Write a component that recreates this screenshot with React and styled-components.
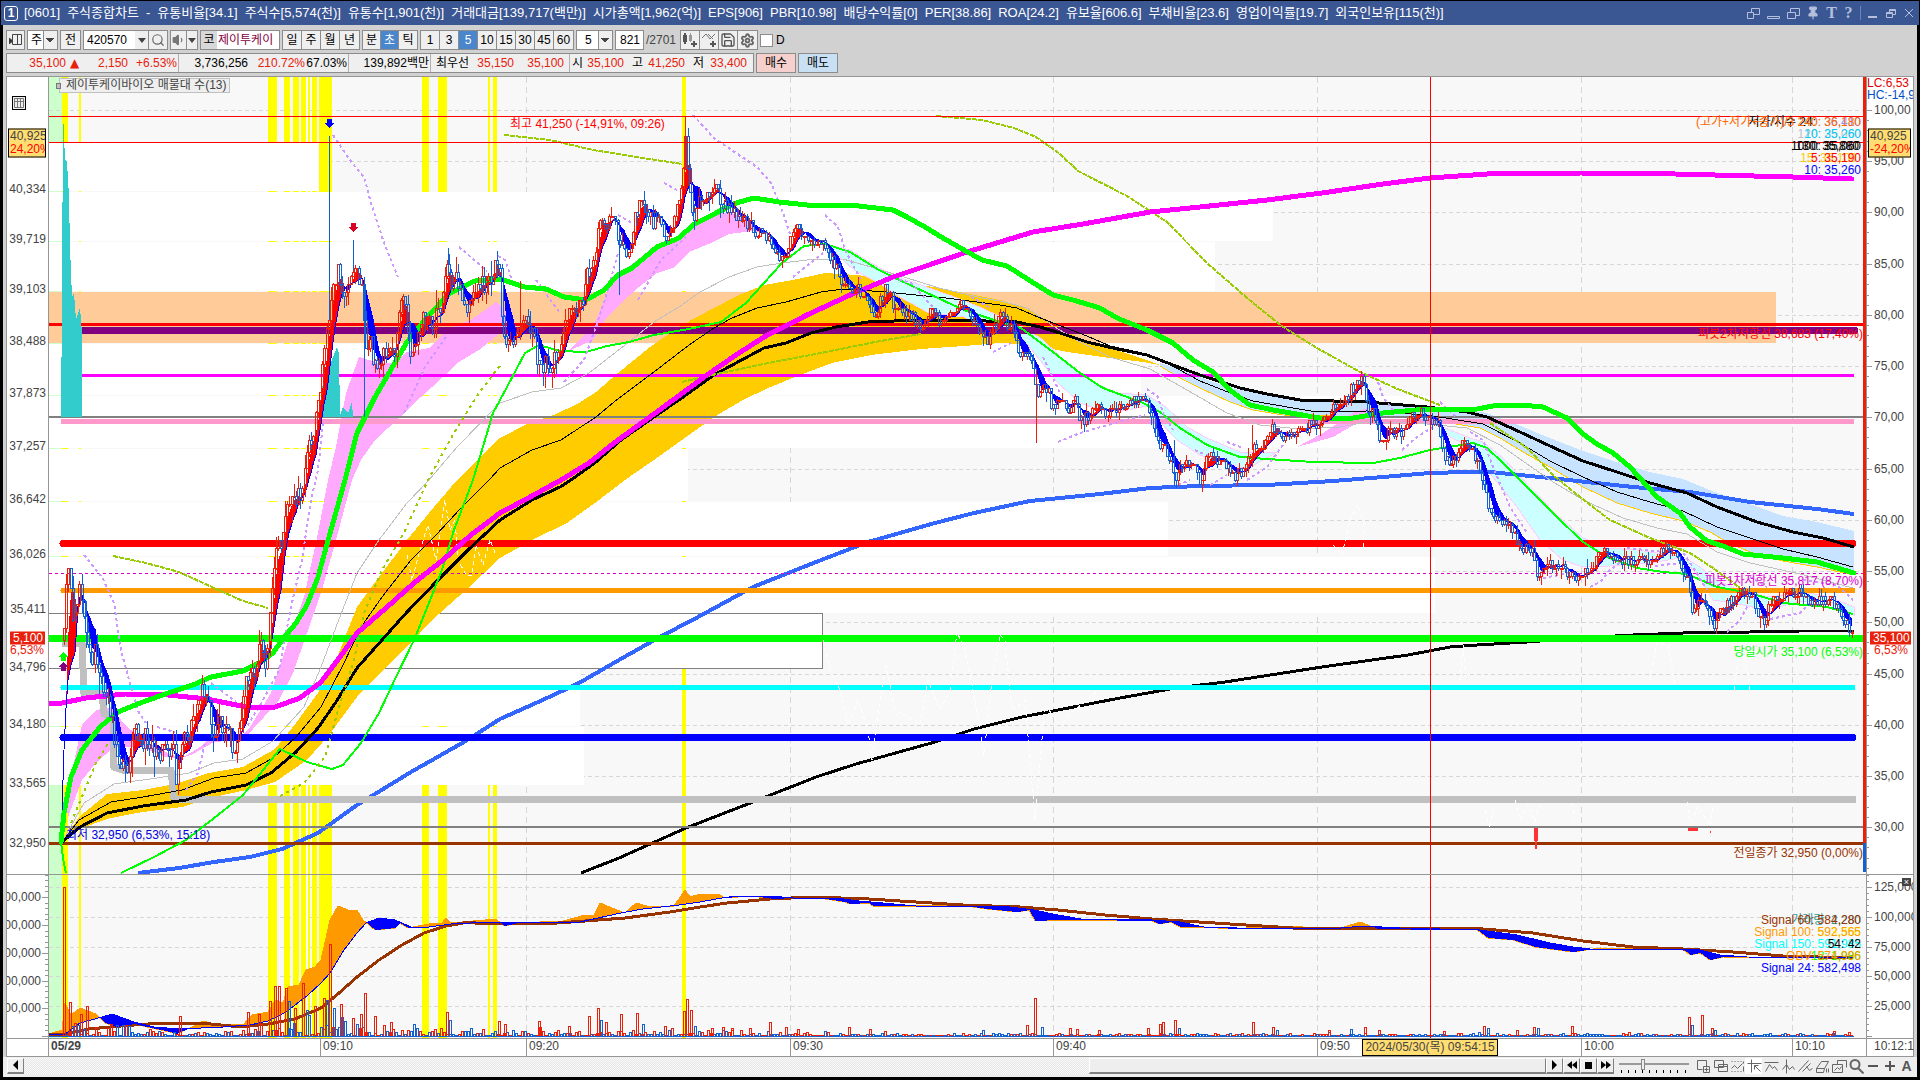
import React from 'react'
import styled, { createGlobalStyle, css } from 'styled-components'
import { Search, Volume1, Save, Settings, Pin } from 'lucide-react'

/* ---------- chart data ---------- */

const AREA = { x: 49, w: 1817 }
const PRICE = { y: 77, h: 797 }
const VOLUME = { y: 875, h: 163 }

const px = (x) => `${((x - AREA.x) / AREA.w) * 100}%`
const py = (pane, y) => `${((y - pane.y) / pane.h) * 100}%`

const GRID_X = [320, 526, 790, 1053, 1317, 1581, 1792]
const PRICE_GRID = [110, 161, 212, 264, 315, 366, 417, 469, 520, 571, 622, 674, 725, 776, 827]
const VOLUME_GRID = [887, 917, 947, 976, 1006]

// [x, width]
const STRIPES = [
  [62, 6], [79, 2], [268, 9], [284, 6], [293, 6], [301, 5], [308, 2], [312, 5],
  [319, 13], [422, 7], [438, 9], [488, 2], [493, 4], [682, 4],
]

// [top, bottom, right edge]
const PROFILE = [
  [143, 191, 319], [192, 241, 1273], [242, 291, 1215], [344, 395, 1141], [396, 448, 1430],
  [449, 501, 688], [502, 556, 1168], [557, 613, 1435], [614, 668, 823], [669, 726, 580], [727, 785, 584],
]

const GOLD =
  '62,842 79,817 107,794 143,790 175,784 209,773 243,767 275,749 296,723 318,693 336,660 357,607 379,577 407,540 429,513 457,480 500,438 529,423 554,415 579,403 596,392 618,373 650,347 682,325 714,308 739,295 764,285 793,280 825,273 857,275 879,278 904,282 939,288 1000,300 1017,305 1033,312 1053,324 1083,340 1110,348 1147,360 1160,365 1143,362 1110,358 1067,352 1053,349 1017,344 1000,343 964,346 921,349 871,355 832,363 800,375 768,388 743,400 714,417 689,435 661,455 625,480 595,503 567,523 532,540 500,558 468,588 429,623 411,643 386,667 357,697 329,735 307,760 275,782 246,790 214,797 182,807 136,813 107,819 82,828'

const SKY_TOP =
  '1160,363 1187,372 1213,382 1240,390 1283,397 1333,401 1383,402 1430,406 1467,410 1487,413 1523,427 1550,438 1583,451 1617,462 1650,472 1683,479 1717,493 1750,504 1783,516 1817,522 1854,531'
const SKY_BOTTOM =
  '1854,575 1817,567 1783,561 1750,552 1727,542 1710,532 1683,521 1650,513 1617,503 1583,487 1550,467 1523,452 1500,438 1480,428 1450,423 1400,417 1333,416 1283,415 1253,410 1230,402 1200,388 1180,378 1160,366'

const PINK_BANDS = [
  '66,800 82,725 96,710 111,707 125,725 143,740 164,751 179,758 164,757 143,747 114,747 96,763 82,780 68,817',
  '182,758 200,747 214,735 243,735 250,727 271,693 286,647 304,597 318,533 328,480 336,447 346,393 359,357 379,363 393,363 407,352 429,348 450,328 471,320 496,302 504,310 511,327 529,330 500,333 479,350 457,363 443,377 421,397 400,417 375,440 361,460 352,480 336,540 321,593 307,633 293,673 279,700 264,717 243,740 214,742 193,754',
  '568,352 586,333 596,320 611,283 621,273 650,250 679,240 693,227 714,213 732,213 750,222 771,235 754,231 729,234 711,243 689,252 675,267 657,273 639,287 621,303 607,317 593,340 571,350',
  '1297,447 1323,433 1353,413 1367,408 1377,420 1357,423 1333,437',
]

const CYAN_BANDS = [
  '825,244 850,250 871,263 893,275 921,285 957,298 982,308 1007,320 1020,325 1043,340 1067,363 1093,382 1117,393 1147,395 1167,408 1187,427 1207,438 1240,452 1277,452 1247,469 1227,463 1200,455 1177,440 1160,422 1147,406 1123,411 1100,410 1080,403 1057,382 1040,360 1017,332 982,327 964,317 929,313 900,297 879,283 854,270 832,250',
  '1440,426 1470,438 1483,442 1503,458 1530,487 1557,515 1583,538 1607,548 1637,550 1683,557 1697,565 1717,580 1743,592 1770,597 1803,592 1830,597 1854,607 1854,615 1827,600 1797,602 1767,610 1733,603 1713,600 1697,573 1680,558 1650,563 1610,566 1583,567 1563,560 1540,540 1517,507 1493,477 1470,447 1450,437',
]

const TEAL = [
  '61,417 62,300 63,112 65,160 67,162 69,197 70,247 72,297 74,293 76,320 80,308 82,333 82,417',
  '320,417 323,380 329,367 337,347 339,353 340,415 343,407 348,413 352,402 353,417',
]

const LINES = {
  black:
    '62,842 80,827 107,813 143,806 186,800 211,792 246,785 271,773 296,752 318,728 336,702 357,668 382,640 407,612 436,582 468,550 500,520 532,500 560,487 571,480 596,462 621,440 654,417 686,395 714,375 736,363 764,348 786,343 811,333 836,327 868,322 921,320 986,321 1017,322 1040,327 1060,333 1087,342 1117,349 1147,355 1173,365 1200,375 1240,388 1267,394 1300,400 1367,402 1427,407 1467,412 1487,417 1520,432 1550,446 1583,461 1617,472 1650,483 1687,493 1717,507 1757,522 1793,532 1823,538 1854,547',
  hairline:
    '62,842 79,820 111,802 143,797 182,790 214,778 246,773 273,758 296,737 321,707 343,665 361,627 382,597 411,560 436,535 461,508 489,480 500,468 532,450 561,440 596,417 614,402 650,375 689,345 714,328 732,318 757,308 786,302 821,292 843,289 886,292 946,298 1000,305 1017,308 1033,315 1053,323 1087,336 1110,346 1147,354 1167,363 1200,381 1233,394 1253,401 1293,408 1317,412 1367,411 1427,415 1483,424 1520,443 1550,461 1583,477 1617,492 1650,502 1683,511 1717,527 1750,538 1783,549 1817,557 1853,567',
  gray:
    '62,842 84,803 114,784 157,778 189,773 214,763 243,759 273,741 304,707 321,667 336,627 357,573 379,540 407,503 429,480 457,447 500,403 532,392 561,388 589,373 625,345 654,322 679,307 700,292 729,277 757,267 782,263 807,260 843,259 871,267 904,277 939,288 982,298 1000,301 1027,308 1053,326 1080,342 1110,357 1150,369 1187,390 1227,413 1260,425 1300,429 1340,427 1367,422 1417,423 1467,428 1500,445 1550,480 1583,500 1623,518 1657,528 1687,534 1717,552 1750,563 1800,574 1853,588',
  magenta:
    '49,703 62,703 86,698 125,694 168,695 207,699 246,707 275,707 300,698 321,682 343,653 357,633 386,608 414,583 443,560 471,535 500,513 532,496 561,480 589,463 614,443 654,414 707,375 736,355 764,337 807,315 850,295 893,277 929,265 964,253 1000,242 1033,232 1083,224 1150,212 1200,207 1267,200 1322,193 1383,184 1430,178 1487,174 1581,173 1675,174 1793,177 1852,179',
  green:
    '61,842 64,813 71,777 82,750 100,727 118,712 143,702 168,693 193,685 211,677 243,671 261,662 273,653 282,640 296,623 307,605 318,577 329,537 345,480 357,433 375,397 389,373 407,342 429,315 450,293 475,281 500,279 525,287 546,289 564,297 586,300 604,290 618,275 632,268 657,247 679,238 693,225 718,212 736,203 754,198 779,202 807,205 850,205 893,210 907,217 925,227 943,238 964,250 982,260 1007,266 1029,280 1053,295 1073,300 1100,308 1117,318 1147,330 1173,343 1193,360 1213,372 1230,390 1250,405 1273,410 1320,418 1347,419 1383,413 1427,409 1477,409 1493,406 1520,405 1543,407 1567,418 1583,434 1597,444 1613,453 1630,467 1657,497 1680,513 1690,527 1707,541 1723,546 1743,554 1783,558 1817,562 1854,573',
  greenThin:
    '121,873 154,857 186,840 218,815 243,795 280,749 307,762 332,769 343,765 361,743 379,713 396,677 414,640 429,603 443,567 454,530 473,480 482,450 493,413 507,387 525,353 539,345 560,351 586,352 607,346 629,342 654,335 689,329 721,322 746,303 764,283 782,263 804,246 825,244 850,252 879,270 914,287 964,310 1000,322 1021,328 1053,352 1080,373 1103,388 1143,403 1160,412 1180,428 1207,445 1240,457 1267,459 1313,462 1373,463 1400,458 1430,450 1473,443 1487,448 1503,463 1533,493 1557,517 1583,542 1607,557 1637,568 1663,572 1687,574 1717,587 1750,593 1783,603 1827,607 1853,614',
  blue:
    '138,873 179,868 214,862 250,857 282,849 318,833 357,805 411,772 464,742 500,719 536,703 560,692 579,683 619,660 658,638 698,617 753,587 816,562 868,542 935,523 974,513 1030,501 1100,494 1150,488 1200,486 1267,485 1333,481 1383,477 1430,473 1467,472 1490,472 1550,478 1633,487 1690,492 1750,502 1817,509 1854,514',
  blackLow:
    '581,873 619,858 686,828 753,802 816,777 856,764 935,742 974,729 1022,717 1120,698 1176,688 1225,682 1322,667 1408,655 1450,647 1477,645 1527,642 1580,638 1633,635 1683,633 1750,632 1800,631 1854,631',
  silver: '62,643 82,643 84,693 102,694 104,714 113,716 114,767 123,770 171,770 174,799 1856,799',
}

// [y, from, to, thickness, colour, round]
const LEVELS = [
  [324, 49, 1863, 3, '#ff0000'],
  [330, 82, 1855, 7, '#800080', true],
  [375, 82, 1854, 3, '#ff00ff'],
  [421, 61, 1854, 5, '#ff99cc'],
  [417, 49, 1863, 2, '#808080'],
  [543, 63, 1853, 7, '#ff0000', true],
  [590, 63, 1853, 5, '#ff9900', true],
  [638, 49, 1863, 7, '#00ff00'],
  [687, 63, 1853, 5, '#00ffff', true],
  [737, 63, 1853, 7, '#0000ff', true],
  [827, 49, 1863, 2, '#808080'],
  [843, 49, 1863, 3, '#993300'],
]

const SAR_FAST = [
  '333,135 352,163 364,177 371,203 384,243 398,277', '459,247 487,271', '498,256 505,260 512,280',
  '536,280 560,313', '446,337 425,367 404,413', '323,423 318,470 311,500 302,560 291,607 279,670 262,702 246,728',
  '84,555 102,577 114,603 121,650 129,680 139,713 146,723', '157,727 175,732', '186,790 198,773 205,743',
  '211,683 236,702', '693,115 714,138 736,153 757,167 771,183 782,210 791,237', '664,183 677,190',
  '618,215 632,223', '825,215 838,227 845,250 861,280', '793,277 823,253', '893,278 911,283 929,303 943,317',
  '971,297 989,307', '993,352 1011,343', '564,382 584,360 596,327 607,293 618,253', '638,300 661,260 686,237',
  '1147,389 1158,397 1163,413 1173,430', '1058,442 1080,433 1115,423 1145,415', '1178,485 1190,480',
  '1195,450 1213,458', '1210,485 1227,475', '1227,442 1243,448', '1247,480 1267,467 1283,445',
  '1378,382 1383,397 1393,410', '1402,450 1417,437 1433,427', '1440,402 1457,418', '1043,357 1060,393',
  '1470,432 1483,440 1493,467 1510,507 1527,533', '1543,578 1570,573', '1590,587 1600,582 1610,570 1623,560',
  '1627,548 1663,552', '1680,548 1693,567 1707,590', '1655,566 1680,563', '1727,632 1740,620 1748,605',
  '1750,577 1767,587', '1770,619 1800,613 1813,600', '1803,580 1837,585 1853,600',
]

const SAR_SLOW = [
  '504,135 550,140 593,150 643,158 682,164',
  '936,116 982,120 1014,128 1036,137 1060,154 1078,171 1127,196 1167,222 1207,263 1247,298 1283,327 1317,348 1360,372 1400,390 1440,405',
  '1490,423 1527,448 1553,475 1580,497 1610,520 1650,538 1690,553 1713,568 1740,588',
  '113,556 146,563 179,572 214,588 243,601 268,608',
  '682,382 721,373 768,363 821,353 875,342 921,334',
]

const SAR_DOTS = [
  '71,823 86,787 96,763 109,742',
  '280,796 304,783 325,757 339,707 354,660 364,613 382,570 404,533 429,478 454,433 479,393 502,363',
]

const GHOSTS = [
  '407,555 412,580 420,550 428,525 436,560 445,500 450,530 455,520 458,560 466,575 472,575 476,545 483,565 490,540 496,555',
  '823,640 830,670 840,690 848,725 858,700 868,730 872,760 880,700 886,665 895,710 905,715 920,725 928,680 940,710 950,690 957,632 965,650 975,700 984,755 992,680 1000,635 1005,640 1012,710 1025,700 1035,820 1045,705 1060,725 1075,710 1098,690',
  '1333,545 1342,555 1350,520 1358,505 1363,520 1364,550',
  '1460,680 1463,645 1466,680', '1650,680 1657,643 1668,645 1675,685', '1734,690 1738,660 1745,655 1750,690',
  '1485,810 1490,828 1494,806', '1515,800 1520,820 1528,805 1535,822 1540,803', '1572,803 1575,820', '1687,802 1690,826 1698,806 1710,826 1713,805',
]

const PRICE_PATH =
  '64,640 66,580 68,565 70,575 73,620 76,600 80,585 83,600 86,640 89,660 92,670 95,645 98,655 101,680 105,700 109,700 113,730 117,755 121,760 125,765 130,760 136,725 140,750 145,738 150,745 157,758 163,752 168,755 173,745 176,785 179,775 181,740 186,733 191,725 197,705 204,690 208,700 214,735 218,715 224,725 229,725 234,755 238,745 243,700 247,670 250,680 255,660 260,650 264,660 267,660 271,610 274,560 277,545 281,540 285,510 290,505 296,505 300,490 303,470 307,450 312,430 318,410 322,370 326,330 329,315 332,300 336,285 339,270 343,290 347,285 351,265 354,270 358,275 362,290 365,340 370,345 375,370 380,355 385,350 392,352 397,335 400,285 403,305 407,320 410,355 414,340 420,338 426,306 432,320 438,315 443,285 447,258 452,290 456,272 462,300 468,305 474,300 480,283 488,280 494,270 499,265 502,310 507,350 512,350 518,330 524,320 530,325 535,350 540,370 545,365 554,362 559,350 564,330 570,305 575,303 582,303 587,270 594,265 598,225 605,222 616,222 621,250 629,250 634,227 639,195 645,205 652,220 661,220 666,238 673,222 679,200 683,167 685,140 689,190 693,222 698,203 709,200 715,183 721,205 732,212 743,222 754,230 768,237 777,257 783,263 788,243 796,223 807,238 823,243 836,270 850,293 864,290 875,317 884,287 896,307 921,325 930,310 943,323 959,303 975,320 986,343 1002,313 1013,333 1020,357 1032,357 1037,400 1042,387 1048,387 1053,410 1060,397 1068,413 1075,403 1080,423 1090,413 1100,400 1103,412 1120,408 1127,402 1145,397 1150,417 1160,443 1168,453 1174,477 1180,467 1192,458 1200,483 1210,450 1218,463 1225,463 1233,477 1243,473 1253,447 1263,447 1272,427 1283,433 1293,438 1307,427 1323,420 1335,403 1343,407 1353,387 1363,380 1367,407 1373,413 1380,440 1390,433 1403,430 1412,413 1420,410 1430,422 1438,425 1445,457 1457,460 1463,440 1472,450 1480,467 1487,500 1492,520 1500,520 1512,527 1520,547 1532,547 1537,573 1545,565 1563,567 1574,580 1578,572 1590,573 1598,553 1617,557 1633,560 1650,558 1663,550 1678,555 1687,580 1693,613 1702,600 1710,617 1713,627 1720,613 1733,600 1740,590 1753,597 1758,617 1765,618 1772,597 1800,592 1813,600 1830,600 1840,613 1850,627 1854,633'

const OBV =
  '49,1034 62,1030 65,1003 71,1015 80,1008 96,1014 105,1023 116,1027 134,1024 147,1027 170,1032 176,1034 192,1027 203,1021 214,1024 243,1025 252,1015 268,1012 275,1000 283,1003 288,987 299,985 306,970 315,967 321,960 330,920 338,906 348,910 357,910 363,920 375,930 395,928 400,923 408,928 429,924 442,923 446,918 451,923 496,919 504,926 518,923 563,921 585,915 594,915 600,903 612,908 625,913 636,903 647,906 674,906 685,890 690,897 697,895 718,894 725,898 751,896 774,899 812,897 845,902 850,904 869,903 873,906 916,906 958,905 987,909 1017,912 1029,910 1035,921 1058,920 1081,920 1152,921 1159,924 1171,922 1180,927 1199,927 1237,929 1265,926 1341,928 1360,922 1378,929 1443,930 1477,930 1488,938 1513,940 1535,947 1573,952 1600,948 1683,949 1690,955 1700,953 1710,960 1723,957 1783,958 1853,958'
const SIGNAL_FAST =
  '49,1034 65,1034 80,1023 102,1017 112,1014 134,1022 154,1027 179,1029 223,1027 250,1025 268,1021 286,1012 308,995 321,983 330,973 344,950 357,933 366,923 379,918 395,920 411,927 429,927 451,924 491,922 580,922 598,918 621,913 643,909 679,905 700,902 722,898 737,896 770,896 793,898 836,898 859,901 883,903 916,906 963,906 1010,907 1034,910 1058,915 1081,919 1152,920 1180,922 1204,927 1237,928 1341,928 1364,926 1400,928 1480,930 1517,935 1550,943 1573,947 1590,949 1680,949 1700,950 1720,955 1747,957 1853,958'
const SIGNAL_SLOW =
  '49,1035 65,1034 89,1029 121,1026 161,1023 201,1023 241,1027 268,1024 295,1019 321,1008 339,993 357,977 379,960 402,945 424,933 446,926 469,922 482,924 558,923 625,918 670,912 700,907 727,903 770,899 812,897 869,899 916,902 963,905 1020,907 1058,910 1105,915 1152,919 1199,922 1246,925 1293,928 1341,928 1420,928 1483,929 1533,933 1583,941 1633,947 1683,949 1733,952 1783,956 1853,958'

// [x, height, falling]
const SPIKES = [
  [63, 149], [69, 34], [86, 30], [80, 22], [179, 20], [247, 24], [258, 22], [269, 35], [274, 50], [278, 50],
  [285, 48], [288, 35, true], [294, 28], [302, 53], [306, 26, true], [314, 30], [323, 38], [326, 36, true],
  [329, 92], [333, 28, true], [340, 32], [352, 18], [360, 22], [364, 43], [374, 20], [390, 14], [446, 24],
  [449, 16, true], [498, 15], [504, 12], [538, 15], [568, 10], [588, 20], [597, 28], [600, 16, true], [605, 14],
  [620, 22], [636, 23], [642, 12, true], [664, 10], [683, 25], [686, 37], [690, 26], [694, 10, true], [711, 8],
  [722, 9], [731, 8], [749, 8], [769, 14], [785, 9], [797, 7], [848, 9], [869, 7], [982, 6, true], [1026, 11],
  [1034, 38], [1041, 9, true], [1069, 8], [1076, 7], [1098, 6], [1147, 8], [1159, 12], [1162, 14], [1174, 16],
  [1178, 8, true], [1252, 14], [1272, 9], [1276, 6, true], [1328, 6], [1350, 7, true], [1364, 9], [1378, 6],
  [1443, 5], [1483, 10], [1487, 8, true], [1516, 6], [1533, 9], [1537, 8, true], [1571, 10], [1688, 19],
  [1691, 11, true], [1701, 21], [1711, 8], [1714, 6, true], [1833, 5], [1848, 4],
]

function parse(points) {
  return points.split(' ').map((pair) => pair.split(',').map(Number))
}

function sampler(points) {
  const list = parse(points)
  return (x) => {
    const next = list.findIndex((point) => point[0] >= x)
    if (next === 0) return list[0][1]
    if (next < 0) return list[list.length - 1][1]
    const [x0, y0] = list[next - 1]
    const [x1, y1] = list[next]
    return y0 + ((y1 - y0) * (x - x0)) / (x1 - x0)
  }
}

function randomizer(seed) {
  let value = seed
  return () => {
    value = (value * 16807) % 2147483647
    return value / 2147483647
  }
}

function average(list, end, size) {
  const part = list.slice(Math.max(0, end - size + 1), end + 1)
  return part.reduce((sum, n) => sum + n, 0) / part.length
}

function buildCandles() {
  const price = sampler(PRICE_PATH)
  const random = randomizer(4205)
  const tick = 4
  const paths = { up: '', down: '', upFill: '', downFill: '', ma: '' }
  const xs = [61, 62]
  const closes = [842, 780]
  let open = 640

  for (let i = 0; i < 818; i++) {
    const x = Math.round(64 + i * 2.188)
    const size = x < 560 ? 22 : x < 760 ? 16 : 11
    const close = Math.round((price(x) + (random() - 0.5) * size) / tick) * tick
    const high = Math.min(open, close) - Math.round(random() * random() * size)
    const low = Math.max(open, close) + Math.round(random() * random() * size)
    const top = Math.min(open, close)
    const height = Math.max(1, Math.abs(open - close))
    const shape = `M${x} ${high}V${top}M${x} ${top + height}V${low}M${x - 1} ${top}h2v${height}h-2z`
    if (close <= open) paths.up += shape
    else paths.down += shape
    xs.push(x)
    closes.push(close)
    open = close
  }

  for (let i = 1; i < xs.length; i++) {
    const a = [average(closes, i - 1, 4), average(closes, i - 1, 8)]
    const b = [average(closes, i, 4), average(closes, i, 8)]
    const quad = `M${xs[i - 1]} ${a[0]}L${xs[i]} ${b[0]}V${b[1]}L${xs[i - 1]} ${a[1]}z`
    if (b[0] < b[1]) paths.upFill += quad
    else paths.downFill += quad
    paths.ma += `${i === 1 ? 'M' : 'L'}${xs[i]} ${b[1]}`
  }
  return paths
}

function buildObv() {
  const obv = sampler(OBV)
  const signal = sampler(SIGNAL_FAST)
  let above = ''
  let below = ''
  for (let x = 50; x < 1853; x += 1) {
    const top = obv(x)
    const base = signal(x)
    const bar = `M${x} ${base}V${top}h1V${base}z`
    if (top < base) above += bar
    else below += bar
  }
  return { above, below }
}

function buildBars() {
  const random = randomizer(77)
  let up = ''
  let down = ''
  const add = (x, height, falling) => {
    const bar = `M${x} 1036v${-height}h2v${height}`
    if (falling) down += bar
    else up += bar
  }
  for (let x = 62; x < 1852; x += 3) {
    const busy = x < 130 ? 18 : x < 250 ? 7 : x < 345 ? 26 : x < 420 ? 13 : x < 720 ? 9 : x < 900 ? 6 : 3
    add(x, 1 + Math.round(random() * random() * busy), random() > 0.45)
  }
  SPIKES.forEach(([x, height, falling]) => add(x, height, falling))
  return { up, down }
}

const candles = buildCandles()
const obvArea = buildObv()
const bars = buildBars()

/* ---------- drawings ---------- */

function Backdrop({ pane, rows }) {
  return (
    <>
      <rect x="49" y={pane.y} width="13" height={pane.h} fill="#ccffcc" />
      {GRID_X.map((x) => (
        <path key={x} d={`M${x}.5 ${pane.y}v${pane.h}`} stroke="#d6d6d6" strokeDasharray="6 4" />
      ))}
      {rows.map((y) => (
        <path key={y} d={`M49 ${y}.5H1863`} stroke="#d6d6d6" strokeDasharray="4 3" />
      ))}
      {STRIPES.map(([x, width]) => (
        <rect key={x} x={x} y={pane.y} width={width} height={pane.h} fill="#ffff00" />
      ))}
    </>
  )
}

function PriceChart() {
  return (
    <Canvas viewBox="49 77 1817 797" preserveAspectRatio="none" shapeRendering="crispEdges" fill="none">
      <Backdrop pane={PRICE} rows={PRICE_GRID} />
      {PROFILE.map(([top, bottom, right]) => (
        <rect key={top} x="49" y={top} width={right - 49} height={bottom - top} fill="#ffffff" />
      ))}
      <rect x="49" y="292" width="1727" height="51" fill="#ffcc99" />
      <path d="M49 613.5H822.5V668.5H49" stroke="#808080" />

      <polygon points={GOLD} fill="#ffcc00" />
      <polygon points={`${SKY_TOP} ${SKY_BOTTOM}`} fill="#c8e3ff" />
      <polyline points={SKY_BOTTOM} stroke="#ffcc00" />
      {PINK_BANDS.map((band) => (
        <polygon key={band} points={band} fill="#ffaaff" />
      ))}
      {CYAN_BANDS.map((band) => (
        <polygon key={band} points={band} fill="#ccffff" stroke="#ffccff" strokeWidth="1" />
      ))}

      <polyline points={LINES.blue} stroke="#3366ff" strokeWidth="4" />
      <polyline points={LINES.blackLow} stroke="#000000" strokeWidth="3" />
      <polyline points={LINES.silver} stroke="#c0c0c0" strokeWidth="7" />
      {LEVELS.map(([y, from, to, width, color, round]) => (
        <path
          key={y}
          d={`M${from} ${y + (width % 2 ? 0.5 : 0)}H${to}`}
          stroke={color}
          strokeWidth={width}
          strokeLinecap={round ? 'round' : 'butt'}
        />
      ))}
      <path d="M49 573.5H1863" stroke="#dd00cc" strokeDasharray="3 3" />
      {TEAL.map((area) => (
        <polygon key={area} points={area} fill="#33cccc" />
      ))}
      {GHOSTS.map((line) => (
        <polyline key={line} points={line} stroke="#ffffff" strokeDasharray="4 3" />
      ))}

      <polyline points={LINES.gray} stroke="#c0c0c0" />
      <polyline points={LINES.hairline} stroke="#000000" />
      <polyline points={LINES.black} stroke="#000000" strokeWidth="3" />
      <polyline points={LINES.greenThin} stroke="#00ff00" strokeWidth="2" />
      <path d="M61 842l2 16 3 15" stroke="#00ff00" strokeWidth="2" />
      {SAR_FAST.map((line) => (
        <polyline key={line} points={line} stroke="#cc99ff" strokeWidth="2" strokeDasharray="3 3" />
      ))}
      {SAR_SLOW.map((line) => (
        <polyline key={line} points={line} stroke="#99cc00" strokeWidth="2" strokeDasharray="5 1" />
      ))}
      {SAR_DOTS.map((line) => (
        <polyline key={line} points={line} stroke="#99cc00" strokeWidth="2" strokeDasharray="3 4" />
      ))}
      <polyline points={LINES.magenta} stroke="#ff00ff" strokeWidth="5" strokeLinejoin="round" strokeLinecap="round" />
      <polyline points={LINES.green} stroke="#00ff00" strokeWidth="5" strokeLinejoin="round" strokeLinecap="round" />

      <path d={candles.upFill} fill="#ff0000" />
      <path d={candles.downFill} fill="#0000ff" />
      <path d={candles.ma} stroke="#0000ff" />
      <path d={candles.up} stroke="#e8200c" transform="translate(.5 .5)" />
      <path d={candles.down} stroke="#1560d0" transform="translate(.5 .5)" />
      <path d="M329.5 136V320M364.5 280V417M353.5 240V270M448.5 248V265M619.5 230V295M1174.5 440V486" stroke="#1560d0" />
      <path d="M520.5 281V340M685.5 116V170M1036.5 370V443M1252.5 425V450" stroke="#e8200c" />

      <path d="M327 119h5v4h3l-5.500 5-5.500-5h3z" fill="#0000ff" />
      <path d="M351 223h5v4h3l-5.500 5-5.500-5h3z" fill="#d80027" />
      <path d="M61 661h5v-4h3l-5.500-5-5.500 5h3z" fill="#00ff00" />
      <path d="M61 671h5v-4h3l-5.500-5-5.500 5h3z" fill="#800080" />
      <path d="M1534 828h4v13h-1v8h-2v-8h-1zM1688 828h10v3h-10zM1710 831h1v2h-1z" fill="#ff3333" />

      <path d="M49 116.500H1863M49 142.500H1866M1430.500 77V874" stroke="#ff0000" />
      <path d="M1864.500 77V843" stroke="#e8200c" strokeWidth="3" />
      <path d="M1864.500 843V872" stroke="#1560d0" strokeWidth="3" />
    </Canvas>
  )
}

function VolumeChart() {
  return (
    <Canvas viewBox="49 875 1817 163" preserveAspectRatio="none" shapeRendering="crispEdges" fill="none">
      <Backdrop pane={VOLUME} rows={VOLUME_GRID} />
      <path d={obvArea.above} fill="#ff9900" />
      <polyline points={OBV} stroke="#ff9900" />
      <polyline points={SIGNAL_SLOW} stroke="#993300" strokeWidth="3" />
      <path d={obvArea.below} fill="#0000ff" />
      <polyline points={SIGNAL_FAST} stroke="#0000ff" />
      <path d={bars.down} stroke="#1560d0" transform="translate(.5 .5)" />
      <path d={bars.up} stroke="#e8200c" transform="translate(.5 .5)" />
      <path d="M49 1036.500H1854" stroke="#1560d0" />
      <path d="M1430.500 875V1038" stroke="#ff0000" />
    </Canvas>
  )
}

const TOOL_ICONS = {
  addBox: 'M2 2h9v6M2 2v9h5M8 8h6v6H8zM11 9v4M9 11h4',
  copyBox: 'M2 2h9v7H2zM6 6h9v7H6zM6 8h9',
  trendFrame: 'M2 3h1M5 3h1M8 3h1M11 3h1M14 3v2M2 13h1M5 13h1M8 13h1M11 13h1M14 8v5M2 10l3-3 3 3 5-5',
  crosshair: 'M1 5h14M5 1v13M8 7l6 6M8 7v4M8 7h4',
  peaks: 'M1 4h14M2 13l4-7 3 4 2-2 3 4',
  split: 'M6 1v14M2 11l4-5 3 5 3-3 2 3',
  slant: 'M1 13L11 2M5 13L13 5M9 8l3 4 3-2',
  eraser: 'M2 10l5-7h7l-4 7zM2 10v4h7l1-4M12 10v4M14 10v4',
  windows: 'M6 2h9v7M6 2v4M1 6h10v8H1zM3 12l3-3 2 2 2-3',
  zoom: 'M10 10l5 5M2 6a4 4 0 1 0 9 0a4 4 0 1 0-9 0',
}

function ToolIcon({ name, bold }) {
  return (
    <svg width="16" height="16" viewBox="0 0 16 16" fill="none" stroke="#666" strokeWidth={bold ? 2 : 1}>
      <path d={TOOL_ICONS[name]} transform="translate(.5 .5)" />
    </svg>
  )
}

const TITLE_ICONS = [
  'M1.5 6.500h6v6h-6zM5.500 6.500v-4h8v6h-6', 'M1.5 10.500h12v2h-12z', 'M1.5 6.500h8v6h-8zM4.500 6.500v-4h9v7h-4',
]

const FACTS = [
  '[0601]', '주식종합차트', '-', '유통비율[34.1]', '주식수[5,574(천)]', '유통수[1,901(천)]', '거래대금[139,717(백만)]',
  '시가총액[1,962(억)]', 'EPS[906]', 'PBR[10.98]', '배당수익률[0]', 'PER[38.86]', 'ROA[24.2]', '유보율[606.6]',
  '부채비율[23.6]', '영업이익률[19.7]', '외국인보유[115(천)]',
]

/* ---------- parts of the window ---------- */

function TitleBar() {
  return (
    <Title>
      <Badge>1</Badge>
      <TitleText>
        {FACTS.map((fact) => <span key={fact}>{fact}</span>)}
      </TitleText>
      {TITLE_ICONS.map((d) => (
        <TitleButton key={d} aria-label="window mode">
          <svg width="14" height="14" viewBox="0 0 14 14" fill="none" stroke="currentColor"><path d={d} /></svg>
        </TitleButton>
      ))}
      <TitleButton aria-label="pin"><Pin size={14} fill="currentColor" /></TitleButton>
      <TitleButton $serif>T</TitleButton>
      <TitleButton $serif>?</TitleButton>
      <TitleRule />
      <TitleButton $small aria-label="minimize">
        <svg width="12" height="14" viewBox="0 0 12 14"><path d="M1 10h9v2H1z" fill="currentColor" /></svg>
      </TitleButton>
      <TitleButton $small aria-label="restore">
        <svg width="12" height="14" viewBox="0 0 12 14" fill="none" stroke="currentColor"><path d="M1.5 6.500h6v5h-6zM1.5 7.500h6M4.500 6V3.500h6v5H8M4.500 4.500h6" /></svg>
      </TitleButton>
      <TitleButton $small aria-label="close">
        <svg width="12" height="14" viewBox="0 0 12 14" stroke="currentColor"><path d="M2 3l8 8M10 3l-8 8" /></svg>
      </TitleButton>
    </Title>
  )
}

function Toolbar() {
  return (
    <ToolRow>
      <Tool $w={19} aria-label="panel">
        <svg width="14" height="14" viewBox="0 0 14 14" fill="none" stroke="#444"><path d="M3.500 1.500h9v10h-9zM8.500 1.500v10" /><path d="M0 5l4 3-4 3z" fill="#333" /></svg>
      </Tool>
      <Group>
        <Select $w={31} aria-label="market" defaultValue="주"><option>주</option></Select>
      </Group>
      <Tool $w={21}>전</Tool>
      <Group>
        <Field $w={51} defaultValue="420570" aria-label="code" />
        <Tool $w={14} $joined aria-label="history"><Caret /></Tool>
        <Tool $w={18} $joined aria-label="search"><Search size={14} color="#666" /></Tool>
      </Group>
      <Group>
        <Tool $w={16} $joined aria-label="sound"><Volume1 size={14} color="#777" fill="#777" /></Tool>
        <Tool $w={10} $joined aria-label="sound options"><Caret /></Tool>
      </Group>
      <Group>
        <Market>코</Market>
        <Field $w={62} $purple defaultValue="제이투케이" aria-label="name" />
      </Group>
      <Group>
        {['일', '주', '월', '년'].map((unit) => <Tool key={unit} $w={19} $joined>{unit}</Tool>)}
      </Group>
      <Group>
        {['분', '초', '틱'].map((unit) => <Tool key={unit} $w={18} $joined $active={unit === '초'}>{unit}</Tool>)}
      </Group>
      <Group>
        {['1', '3', '5', '10', '15', '30', '45', '60'].map((n) => (
          <Tool key={n} $w={19} $joined $active={n === '5'}>{n}</Tool>
        ))}
      </Group>
      <Group>
        <Select $w={37} aria-label="interval" defaultValue="5"><option>5</option></Select>
      </Group>
      <Group>
        <Field $w={27} $right defaultValue="821" aria-label="bars" />
      </Group>
      <Total>/2701</Total>
      <Group>
        <Tool $w={19} $joined aria-label="add candles">
          <svg width="16" height="16" viewBox="0 0 16 16" fill="#555"><path d="M1 3h4v7H1zM2 1h2v11H2z" /><path d="M7 3h3v6H7zM8 1h1v9H8z" fill="#999" /><path d="M11 9h2v6h-2zM9 11h6v2H9z" /></svg>
        </Tool>
        <Tool $w={19} $joined aria-label="add line">
          <svg width="16" height="16" viewBox="0 0 16 16" fill="none" stroke="#777"><path d="M1 6l4-4 4 5 5-5M7 2l5 5" /><path d="M11 9h2v6h-2zM9 11h6v2H9z" fill="#555" stroke="none" /></svg>
        </Tool>
        <Tool $w={19} $joined aria-label="save"><Save size={16} color="#555" /></Tool>
        <Tool $w={19} $joined aria-label="settings"><Settings size={15} color="#666" strokeWidth={3} /></Tool>
      </Group>
      <Check><input type="checkbox" />D</Check>
    </ToolRow>
  )
}

function QuoteRow() {
  return (
    <ToolRow $gap={2}>
      <Quote>
        <Cell>
          <Num $w={59} $red>35,100</Num>
          <Rise>▲</Rise>
          <Num $w={45} $red>2,150</Num>
          <Num $w={49} $red>+6.53%</Num>
        </Cell>
        <Cell>
          <Num $w={69}>3,736,256</Num>
          <Num $w={57} $red>210.72%</Num>
          <Num $w={42}>67.03%</Num>
        </Cell>
        <Cell><Num $w={80}>139,892백만</Num></Cell>
        <Cell>
          <Num $w={38}>최우선</Num>
          <Num $w={45} $red>35,150</Num>
          <Num $w={50} $red>35,100</Num>
          <Num $w={4} />
        </Cell>
        <Cell $last>
          <Num $w={13}>시</Num>
          <Num $w={41} $red>35,100</Num>
          <Num $w={19}>고</Num>
          <Num $w={42} $red>41,250</Num>
          <Num $w={19}>저</Num>
          <Num $w={43} $red>33,400</Num>
        </Cell>
      </Quote>
      <Order $color="#f6d0cc">매수</Order>
      <Order $color="#c8dff4">매도</Order>
    </ToolRow>
  )
}

const LEFT_LABELS = [
  [189, '40,334'], [239, '39,719'], [289, '39,103'], [341, '38,488'], [393, '37,873'], [446, '37,257'],
  [499, '36,642'], [554, '36,026'], [609, '35,411'], [667, '34,796'], [724, '34,180'], [783, '33,565'], [843, '32,950'],
]

// [y, right edge, colour, text]
const PRICE_NOTES = [
  [122, 1861, '#8899ff', '36,410'],
  [122, 1816, '#000000', '저가/지수 24:'],
  [122, 1861, '#ff6600', '(고가+저가+종가)/3 240: 36,180'],
  [134, 1861, '#c0c0c0', '120: 25,060'],
  [134, 1861, '#00ccff', '10: 35,260'],
  [146, 1861, '#000000', '1000: 35,060'],
  [146, 1859, '#000000', '130: 35,880'],
  [158, 1857, '#ffcc00', '15: 35,100'],
  [158, 1861, '#ff0000', '5: 35,190'],
  [170, 1861, '#0000ff', '10: 35,260'],
  [334, 1863, '#ff0000', '피봇2차저항선 38,683 (17,40%)'],
  [581, 1863, '#dd00cc', '피봇1차저항선 35,817 (8,70%)'],
  [652, 1863, '#00ff00', '당일시가 35,100 (6,53%)'],
  [853, 1863, '#993300', '전일종가 32,950 (0,00%)'],
]

const VOLUME_NOTES = [
  [920, 1861, '#339999', '거래량: 2,280'],
  [920, 1861, '#993300', 'Signal 60: 584,280'],
  [932, 1861, '#ffff00', '5: 3,356'],
  [932, 1861, '#ff9900', 'Signal 100: 592,565'],
  [944, 1861, '#00ffff', 'Signal 150: 591,985'],
  [944, 1861, '#000000', '54: 42'],
  [956, 1861, '#00ff00', '12: 1,986'],
  [956, 1861, '#ff9900', 'OBV: 574,996'],
  [968, 1861, '#0000ff', 'Signal 24: 582,498'],
]

function Notes({ pane, list }) {
  return list.map(([y, right, color, text]) => (
    <Note key={text + color} $y={py(pane, y)} $right={px(1866 - right + AREA.x)} $color={color}>{text}</Note>
  ))
}

function PricePane() {
  return (
    <Pane $grow={797}>
      <Axis $side="left">
        <GridIcon aria-label="table view">
          <svg width="10" height="10" viewBox="0 0 10 10" fill="none" stroke="#777"><path d="M.5.5h9v9h-9zM.5 3.500h9M3.500.5v9M6.500.5v9" /></svg>
        </GridIcon>
        {LEFT_LABELS.map(([y, text]) => <LeftLabel key={y} $y={py(PRICE, y)}>{text}</LeftLabel>)}
        <CursorTag $y={py(PRICE, 143)} $side="left"><span>40,925</span><em>24,20%</em></CursorTag>
        <PriceTag $y={py(PRICE, 638)} $side="left">5,100</PriceTag>
        <Percent $y={py(PRICE, 650)} $side="left">6,53%</Percent>
      </Axis>
      <Plot>
        <PriceChart />
        <Legend><i />제이투케이바이오 매물대 수(13)</Legend>
        <Note $y={py(PRICE, 124)} $x={px(510)} $color="#ff0000">최고 41,250 (-14,91%, 09:26)</Note>
        <Note $y={py(PRICE, 835)} $x={px(66)} $color="#0000e0">최저 32,950 (6,53%, 15:18)</Note>
        <Notes pane={PRICE} list={PRICE_NOTES} />
      </Plot>
      <Axis $side="right">
        <Canvas viewBox="1867 77 46 797" preserveAspectRatio="none" shapeRendering="crispEdges" stroke="#969696">
          {PRICE_GRID.map((y) => (
            <path key={y} d={`M1867 ${y}.5h5M1867 ${y + 10}.5h2M1867 ${y + 20}.5h2M1867 ${y + 31}.5h2M1867 ${y + 41}.5h2`} />
          ))}
        </Canvas>
        <Change $color="#e00000">LC:6,53</Change>
        <Change $color="#0050c8">HC:-14,91</Change>
        {PRICE_GRID.map((y, i) => (
          <RightLabel key={y} $y={py(PRICE, y)}>{100 - i * 5},00</RightLabel>
        ))}
        <CursorTag $y={py(PRICE, 143)}><span>40,925</span><em>-24,20%</em></CursorTag>
        <PriceTag $y={py(PRICE, 638)}>35,100</PriceTag>
        <Percent $y={py(PRICE, 650)}>6,53%</Percent>
      </Axis>
    </Pane>
  )
}

function VolumePane() {
  return (
    <Pane $grow={163}>
      <Axis $side="left">
        <Canvas viewBox="7 875 41 163" preserveAspectRatio="none" shapeRendering="crispEdges" stroke="#969696">
          {[897, 925, 953, 981, 1008, 1036].map((y) => (
            <path key={y} d={`M42 ${y}.5h6M45 ${y - 6}.5h3M45 ${y - 11}.5h3M45 ${y - 17}.5h3M45 ${y - 22}.5h3`} />
          ))}
        </Canvas>
        {[897, 925, 953, 981, 1008].map((y) => <LeftLabel key={y} $inset $y={py(VOLUME, y)}>00,000</LeftLabel>)}
      </Axis>
      <Plot>
        <VolumeChart />
        <Notes pane={VOLUME} list={VOLUME_NOTES} />
      </Plot>
      <Axis $side="right">
        <Canvas viewBox="1867 875 46 163" preserveAspectRatio="none" shapeRendering="crispEdges" stroke="#969696">
          {[...VOLUME_GRID, 1036].map((y) => (
            <path key={y} d={`M1867 ${y}.5h5M1867 ${y - 6}.5h2M1867 ${y - 12}.5h2M1867 ${y - 18}.5h2M1867 ${y - 24}.5h2`} />
          ))}
        </Canvas>
        {VOLUME_GRID.map((y, i) => (
          <RightLabel key={y} $y={py(VOLUME, y)}>{['125,000', '100,000', '75,000', '50,000', '25,000'][i]}</RightLabel>
        ))}
        <ClosePane aria-label="close pane">×</ClosePane>
      </Axis>
    </Pane>
  )
}

function TimeAxis() {
  const times = ['09:10', '09:20', '09:30', '09:40', '09:50', '10:00', '10:10']
  return (
    <TimeRow>
      <Corner />
      <TimeTrack>
        <Time $x="0" $bold>05/29</Time>
        {GRID_X.map((x, i) => <Time key={x} $x={px(x)}>{times[i]}</Time>)}
        <TimeTag $x={px(1430)}>2024/05/30(목) 09:54:15</TimeTag>
      </TimeTrack>
      <LastTime>10:12:1</LastTime>
    </TimeRow>
  )
}

function BottomBar() {
  return (
    <Bottom>
      <Step aria-label="scroll left"><svg width="5" height="10" viewBox="0 0 5 10"><path d="M5 0v10L0 5z" /></svg></Step>
      <Track><Thumb /></Track>
      <Step aria-label="play"><svg width="5" height="10" viewBox="0 0 5 10"><path d="M0 0v10l5-5z" /></svg></Step>
      <Step aria-label="rewind"><svg width="10" height="8" viewBox="0 0 10 8"><path d="M5 0v8L0 4zM10 0v8L5 4z" /></svg></Step>
      <Step aria-label="stop"><svg width="7" height="7" viewBox="0 0 7 7"><path d="M0 0h7v7H0z" /></svg></Step>
      <Step aria-label="forward"><svg width="10" height="8" viewBox="0 0 10 8"><path d="M0 0v8l5-4zM5 0v8l5-4z" /></svg></Step>
      <Speed>
        <input type="range" min="0" max="9" defaultValue="3" aria-label="speed" />
        <svg width="68" height="3" viewBox="0 0 68 3" shapeRendering="crispEdges">
          {[2, 9, 16, 23, 30, 37, 44, 51, 58, 66].map((x) => <path key={x} d={`M${x}.5 0v3`} stroke="#000" />)}
        </svg>
      </Speed>
      {Object.keys(TOOL_ICONS).map((name) => (
        <IconButton key={name} $active={name === 'crosshair'} aria-label={name}><ToolIcon name={name} bold={name === 'zoom'} /></IconButton>
      ))}
      <IconButton aria-label="narrower"><svg width="10" height="10" viewBox="0 0 10 10"><path d="M0 4h10v2H0z" fill="#555" /></svg></IconButton>
      <IconButton aria-label="wider"><svg width="10" height="10" viewBox="0 0 10 10"><path d="M0 4h10v2H0zM4 0h2v10H4z" fill="#555" /></svg></IconButton>
      <IconButton $letter>A</IconButton>
    </Bottom>
  )
}

export default function App() {
  return (
    <>
      <GlobalStyle />
      <Window>
        <TitleBar />
        <Body>
          <Toolbar />
          <QuoteRow />
          <ChartPanel>
            <PricePane />
            <VolumePane />
            <TimeAxis />
          </ChartPanel>
          <BottomBar />
        </Body>
      </Window>
    </>
  )
}

const GlobalStyle = createGlobalStyle`
  * {
    box-sizing: border-box;
  }

  body {
    margin: 0;
    background: #000;
  }

  body, button, input, select {
    font-family: 'Liberation Sans', 'Noto Sans CJK KR', sans-serif;
    font-size: 12px;
    line-height: 14px;
  }

  button, input, select {
    margin: 0;
    padding: 0;
    border: 0;
    border-radius: 0;
    background: none;
    color: inherit;
  }
`

const Window = styled.div`
  display: flex;
  flex-direction: column;
  height: 100vh;
  min-height: 480px;
  padding: 1px 0 3px;
  overflow: hidden;
`

const Title = styled.header`
  display: flex;
  align-items: center;
  height: 24px;
  flex: none;
  margin: 0 1px;
  padding: 0 1px 0 3px;
  background: #3a5693;
  color: #fff;
`

const Badge = styled.span`
  width: 14px;
  height: 15px;
  margin-right: 6px;
  border: 1px solid #fff;
  border-radius: 3px;
  font-weight: bold;
  line-height: 13px;
  text-align: center;
`

const TitleText = styled.h1`
  display: flex;
  flex: 1;
  gap: 7px;
  margin: 0;
  font-size: 13px;
  font-weight: normal;
  line-height: 20px;
  white-space: nowrap;
`

const TitleButton = styled.button`
  display: flex;
  flex: none;
  justify-content: center;
  width: ${(props) => (props.$small ? 18 : 20)}px;
  color: #b4c0dc;

  ${(props) =>
    props.$serif &&
    css`
      width: 17px;
      font-family: 'Liberation Serif', serif;
      font-size: 16px;
      font-weight: bold;
    `};
`

const TitleRule = styled.span`
  width: 1px;
  height: 14px;
  margin: 0 3px;
  background: #6f84b2;
`

const Body = styled.main`
  display: flex;
  flex: 1;
  flex-direction: column;
  min-height: 0;
  margin: 0 3px;
  padding: 5px 3px 0;
  background: #d1d1d1;
`

const ToolRow = styled.div`
  display: flex;
  align-items: center;
  flex: none;
  gap: ${(props) => props.$gap || 2}px;
  height: 20px;
  margin-bottom: 3px;
  color: #000;
  white-space: nowrap;
`

const Group = styled.div`
  display: flex;
  height: 20px;
  border: 1px solid #8c8c8c;
  background: #fff;
`

const Tool = styled.button`
  display: flex;
  flex: none;
  align-items: center;
  justify-content: center;
  width: ${(props) => props.$w}px;
  height: 20px;
  border: 1px solid #8c8c8c;
  background: #efefef;

  ${(props) =>
    props.$joined &&
    css`
      height: 18px;
      border-width: 0 1px 0 0;

      &:last-child {
        border-right: 0;
      }
    `};

  ${(props) =>
    props.$active &&
    css`
      background: #4a86cc;
      color: #fff;
    `};
`

const Caret = styled.i`
  border: 4px solid transparent;
  border-top: 5px solid #444;
  border-bottom: 0;
`

const Select = styled.select`
  appearance: none;
  width: ${(props) => props.$w - 2}px;
  padding-left: ${(props) => (props.$w > 32 ? 8 : 3)}px;
  background:
    linear-gradient(45deg, transparent 50%, #444 50%) right 7px center / 4px 4px no-repeat,
    linear-gradient(-45deg, transparent 50%, #444 50%) right 3px center / 4px 4px no-repeat,
    linear-gradient(#8c8c8c, #8c8c8c) right 13px top / 1px 100% no-repeat,
    linear-gradient(#efefef, #efefef) right / 13px 100% no-repeat,
    #fff;
`

const Field = styled.input`
  width: ${(props) => props.$w}px;
  padding: 0 ${(props) => (props.$purple ? 1 : 3)}px;
  background: #fff;
  color: ${(props) => (props.$purple ? '#800040' : '#000')};
  text-align: ${(props) => (props.$right ? 'right' : 'left')};
`

const Market = styled.span`
  width: 16px;
  background: #d8d8d8;
  line-height: 18px;
  text-align: center;
`

const Total = styled.span`
  width: 32px;
  color: #444;
`

const Check = styled.label`
  display: flex;
  align-items: center;
  gap: 3px;

  input {
    appearance: none;
    width: 13px;
    height: 13px;
    border: 1px solid #8c8c8c;
    background: #fff;
  }
`

const Quote = styled.div`
  display: flex;
  height: 20px;
  border: 1px solid #8c8c8c;
  background: #efefef;
`

const Cell = styled.div`
  display: flex;
  align-items: center;
  border-right: ${(props) => (props.$last ? 0 : 1)}px solid #b0b0b0;
  padding-right: ${(props) => (props.$last ? 6 : 1)}px;
`

const Num = styled.span`
  width: ${(props) => props.$w}px;
  color: ${(props) => (props.$red ? '#e8200c' : '#000')};
  text-align: right;
`

const Rise = styled.span`
  width: 17px;
  color: #e8200c;
  font-family: 'DejaVu Sans', sans-serif;
  text-align: center;
`

const Order = styled.button`
  width: 40px;
  height: 20px;
  border: 1px solid #8c8c8c;
  background: ${(props) => props.$color};
`

const ChartPanel = styled.section`
  display: flex;
  flex: 1;
  flex-direction: column;
  min-height: 0;
  border: 1px solid #969696;
  background: #fff;
  color: #444;
`

const Pane = styled.div`
  display: flex;
  flex: ${(props) => props.$grow} 1 0;
  min-height: 0;
  box-sizing: content-box;
  border-bottom: 1px solid #969696;
`

const Plot = styled.div`
  position: relative;
  flex: 1;
  overflow: hidden;
  background: #f8f8f8;
`

const Canvas = styled.svg`
  position: absolute;
  width: 100%;
  height: 100%;
  inset: 0;
`

const Axis = styled.div`
  position: relative;
  overflow: hidden;

  ${(props) =>
    props.$side === 'left'
      ? css`
          width: 42px;
          border-right: 1px solid #969696;
        `
      : css`
          width: 47px;
          border-left: 1px solid #969696;
        `};
`

const onScale = css`
  position: absolute;
  top: ${(props) => props.$y};
  transform: translateY(-50%);
  white-space: nowrap;
`

const LeftLabel = styled.span`
  ${onScale};
  right: ${(props) => (props.$inset ? 7 : 2)}px;
`

const RightLabel = styled.span`
  ${onScale};
  left: 7px;
`

const Change = styled.div`
  color: ${(props) => props.$color};
  line-height: 12px;
  white-space: nowrap;
`

const CursorTag = styled.div`
  ${onScale};
  right: 2px;
  width: ${(props) => (props.$side === 'left' ? 38 : 43)}px;
  height: 29px;
  padding-left: 1px;
  overflow: hidden;
  border: 1px solid #000;
  background: #ffdd71;
  line-height: 13px;

  em {
    display: block;
    color: #ff0000;
    font-style: normal;
  }
`

const PriceTag = styled.span`
  ${onScale};
  left: 3px;
  width: ${(props) => (props.$side === 'left' ? 35 : 41)}px;
  padding-left: 3px;
  background: #e8200c;
  color: #fff;
  line-height: 13px;
`

const Percent = styled.span`
  ${onScale};
  left: ${(props) => (props.$side === 'left' ? 3 : 7)}px;
  color: #e8200c;
`

const GridIcon = styled.button`
  display: flex;
  margin: 19px 0 0 5px;
  padding: 1px;
  border: 1px solid #000;
  background: #eee;
`

const Legend = styled.div`
  position: absolute;
  display: flex;
  align-items: center;
  top: 1px;
  left: 10px;
  height: 15px;
  padding: 0 2px;
  gap: 5px;
  border: 1px solid #c0c0c0;
  background: #efefef;
  line-height: 13px;

  i {
    width: 5px;
    height: 6px;
    margin-left: -6px;
    border: 1px solid #777;
    background: #c0c0c0;
  }
`

const Note = styled.span`
  ${onScale};
  left: ${(props) => props.$x};
  right: ${(props) => props.$right};
  color: ${(props) => props.$color};
`

const ClosePane = styled.button`
  position: absolute;
  top: 3px;
  right: 2px;
  width: 9px;
  height: 8px;
  background: #444;
  color: #fff;
  font-size: 9px;
  line-height: 8px;
`

const TimeRow = styled.div`
  display: flex;
  flex: none;
  height: 17px;
`

const Corner = styled.div`
  width: 42px;
  border-right: 1px solid #969696;
`

const TimeTrack = styled.div`
  position: relative;
  flex: 1;
`

const Time = styled.span`
  position: absolute;
  left: ${(props) => props.$x};
  height: 17px;
  padding-left: 2px;
  border-left: ${(props) => (props.$bold ? 0 : 1)}px solid #969696;
  font-weight: ${(props) => (props.$bold ? 'bold' : 'normal')};
`

const TimeTag = styled.span`
  position: absolute;
  left: ${(props) => props.$x};
  width: 136px;
  height: 17px;
  margin-left: -68px;
  border: 1px solid #000;
  background: #ffdd71;
  text-align: center;
  white-space: nowrap;
`

const LastTime = styled.span`
  width: 47px;
  padding-left: 7px;
  border-left: 1px solid #969696;
  white-space: nowrap;
`

const Bottom = styled.footer`
  display: flex;
  align-items: center;
  flex: none;
  height: 20px;
  margin: 0 -3px;
  padding: 0 2px 3px 4px;
  background: #eeeeee;
`

const Step = styled.button`
  display: flex;
  align-items: center;
  justify-content: center;
  width: 17px;
  height: 16px;
  border: 1px solid #fff;
  border-right-color: #808080;
  border-bottom: 2px solid #808080;
  background: #efefef;
`

const Track = styled.div`
  display: flex;
  flex: 1;
  justify-content: flex-end;
  height: 16px;
  background: repeating-conic-gradient(#e6e6e6 0 25%, #fafafa 0 50%) 0 0 / 2px 2px;
`

const Thumb = styled.div`
  width: 30%;
  border: 1px solid #fff;
  border-right-color: #808080;
  border-bottom: 2px solid #808080;
  background: #eeeeee;
`

const Speed = styled.div`
  width: 70px;
  margin: 0 5px;

  input {
    display: block;
    appearance: none;
    width: 70px;
    height: 12px;
    background: linear-gradient(#999, #999) center / 100% 2px no-repeat;
  }

  input::-webkit-slider-thumb {
    appearance: none;
    width: 4px;
    height: 11px;
    border: 1px solid #888;
    background: #eee;
  }

  svg {
    display: block;
  }
`

const IconButton = styled.button`
  display: flex;
  align-items: center;
  justify-content: center;
  width: 17px;
  height: 16px;
  background: ${(props) => (props.$active ? '#fff' : 'none')};
  font-size: ${(props) => (props.$letter ? 14 : 12)}px;
  font-weight: bold;
  color: #555;
`
